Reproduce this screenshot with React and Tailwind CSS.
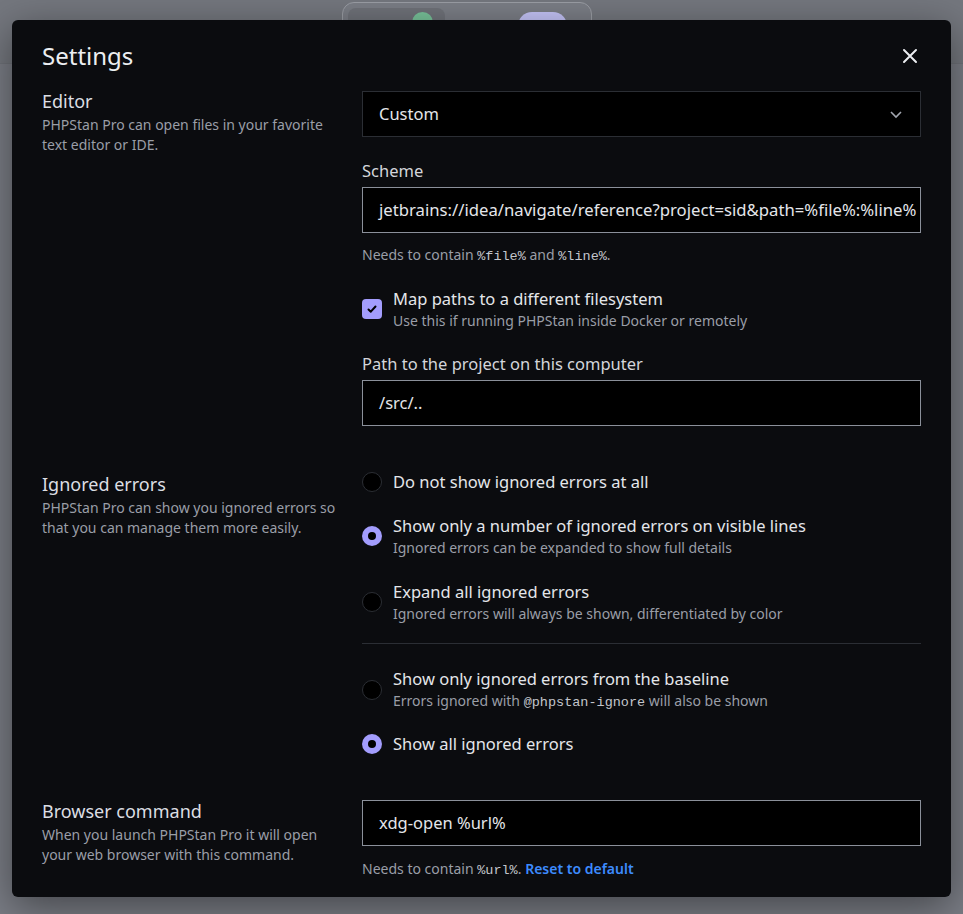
import { useState } from 'react'

function Radio({ checked }) {
  if (checked) {
    return (
      <span className="flex h-5 w-5 shrink-0 items-center justify-center rounded-full bg-[#a39dfd]">
        <span className="h-2 w-2 rounded-full bg-black" />
      </span>
    )
  }
  return <span className="h-5 w-5 shrink-0 rounded-full border border-[#2b2e34] bg-black" />
}

function Option({ title, sub, checked, onClick }) {
  return (
    <button className="flex w-full items-center gap-[11px] text-left" onClick={onClick}>
      <Radio checked={checked} />
      <div>
        <div className="text-[16.5px] leading-6 text-[#e4e6ea]">{title}</div>
        {sub ? <div className="text-sm leading-5 text-[#9a9ea7]">{sub}</div> : null}
      </div>
    </button>
  )
}

function SectionHead({ title, children }) {
  return (
    <div className="w-[300px] shrink-0">
      <div className="text-lg leading-7 text-[#dcdee3]">{title}</div>
      <div className="text-sm leading-5 text-[#9a9ea7]">{children}</div>
    </div>
  )
}

export default function App() {
  const [shown, setShown] = useState('count')
  const [scope, setScope] = useState('all')
  const [mapPaths, setMapPaths] = useState(true)

  var mono = { fontFamily: '"Liberation Mono", "DejaVu Sans Mono", monospace' }

  return (
    <div className="relative h-[914px] overflow-hidden bg-[#7a7d85]" style={{ fontFamily: '"Noto Sans", "Open Sans", sans-serif' }}>
      {/* page behind the dialog */}
      <div className="h-16 border-b border-[#6f7279] bg-[#74777e] pl-[342px] pt-[2px]">
        <div className="flex h-12 w-[250px] items-start gap-3 rounded-xl border border-[#9b9ea5] bg-[#7b7e86] p-[5px]">
          <div className="flex h-9 w-[97px] items-center gap-3 rounded-lg bg-[#6f7279] px-3">
            <span className="text-sm text-[#c9cbd0]">Errors</span>
            <span className="h-7 w-[26px] rounded-full bg-[#78c39a]" />
          </div>
          <div className="flex h-9 items-center gap-2 px-2">
            <span className="text-sm text-[#c9cbd0]">Wizard</span>
            <span className="h-7 w-[49px] rounded-full bg-[#c5c4f8]" />
          </div>
        </div>
      </div>

      <div className="absolute left-3 right-3 top-5 h-[877px] rounded-md bg-[#0b0c0f] px-[30px] pt-5 shadow-[0_10px_40px_rgba(0,0,0,0.45)]">
        <div className="flex h-8 items-center justify-between">
          <h2 className="text-2xl leading-8 text-[#eceef1]">Settings</h2>
          <button className="mr-[3px] text-[#eceef1]">
            <svg width="16" height="16" viewBox="0 0 16 16" fill="none" stroke="currentColor" strokeWidth="2" strokeLinecap="round">
              <path d="M2 2L14 14M14 2L2 14" />
            </svg>
          </button>
        </div>

        {/* Editor */}
        <div className="mt-[15px] flex gap-5">
          <SectionHead title="Editor">
            PHPStan Pro can open files in your favorite text editor or IDE.
          </SectionHead>
          <div className="min-w-0 flex-1 pt-1">
            <div className="flex h-[46px] items-center justify-between border border-[#2b2e34] bg-black pl-4 pr-[17px]">
              <span className="text-[16.5px] text-[#e4e6ea]">Custom</span>
              <svg width="14" height="14" viewBox="0 0 14 14" fill="none" stroke="#a3a7b0" strokeWidth="1.6">
                <path d="M2 5l5 5 5-5" />
              </svg>
            </div>

            <div className="mt-[22px] text-[16.5px] leading-6 text-[#d4d6db]">Scheme</div>
            <div className="mt-1 flex h-[46px] items-center overflow-hidden border border-[#8b909a] bg-black pl-4">
              <span className="whitespace-nowrap text-[16.7px] text-[#e4e6ea]">
                jetbrains://idea/navigate/reference?project=sid&amp;path=%file%:%line%
              </span>
            </div>
            <div className="mt-3 text-sm leading-5 text-[#9a9ea7]">
              Needs to contain <span style={mono} className="text-[13.5px] text-[#c3c6cc]">%file%</span> and{' '}
              <span style={mono} className="text-[13.5px] text-[#c3c6cc]">%line%</span>.
            </div>

            <button className="mt-5 flex items-center gap-[11px] text-left" onClick={function () { setMapPaths(!mapPaths) }}>
              {mapPaths ? (
                <span className="flex h-5 w-5 items-center justify-center rounded-[4px] bg-[#a39dfd]">
                  <svg width="12" height="12" viewBox="0 0 12 12" fill="none" stroke="#000" strokeWidth="2" strokeLinecap="round" strokeLinejoin="round">
                    <path d="M2.5 6.5l2.3 2.2L9.5 3.5" />
                  </svg>
                </span>
              ) : (
                <span className="h-5 w-5 rounded-[4px] border border-[#2b2e34] bg-black" />
              )}
              <div>
                <div className="text-[16.5px] leading-6 text-[#e4e6ea]">Map paths to a different filesystem</div>
                <div className="text-sm leading-5 text-[#9a9ea7]">Use this if running PHPStan inside Docker or remotely</div>
              </div>
            </button>

            <div className="mt-[21px] text-[16.5px] leading-6 text-[#d4d6db]">Path to the project on this computer</div>
            <div className="mt-1 flex h-[46px] items-center border border-[#8b909a] bg-black px-4">
              <span className="text-[16.5px] text-[#e4e6ea]">/src/..</span>
            </div>
          </div>
        </div>

        {/* Ignored errors */}
        <div className="mt-[44px] flex gap-5">
          <SectionHead title="Ignored errors">
            PHPStan Pro can show you ignored errors so that you can manage them more easily.
          </SectionHead>
          <div className="flex-1">
            <Option title="Do not show ignored errors at all" checked={shown === 'none'} onClick={function () { setShown('none') }} />
            <div className="mt-5">
              <Option
                title="Show only a number of ignored errors on visible lines"
                sub="Ignored errors can be expanded to show full details"
                checked={shown === 'count'}
                onClick={function () { setShown('count') }}
              />
            </div>
            <div className="mt-[22px]">
              <Option
                title="Expand all ignored errors"
                sub="Ignored errors will always be shown, differentiated by color"
                checked={shown === 'all'}
                onClick={function () { setShown('all') }}
              />
            </div>
            <div className="mt-[19px] h-px bg-[#2b2e34]" />
            <div className="mt-[23px]">
              <Option
                title="Show only ignored errors from the baseline"
                sub={
                  <span>
                    Errors ignored with <span style={mono} className="text-[13.5px] text-[#c3c6cc]">@phpstan-ignore</span> will also be shown
                  </span>
                }
                checked={scope === 'baseline'}
                onClick={function () { setScope('baseline') }}
              />
            </div>
            <div className="mt-[19px]">
              <Option title="Show all ignored errors" checked={scope === 'all'} onClick={function () { setScope('all') }} />
            </div>
          </div>
        </div>

        {/* Browser command */}
        <div className="mt-[41px] flex gap-5">
          <SectionHead title="Browser command">
            When you launch PHPStan Pro it will open your web browser with this command.
          </SectionHead>
          <div className="flex-1 pt-[3px]">
            <div className="flex h-[46px] items-center border border-[#8b909a] bg-black px-4">
              <span className="text-[16.5px] text-[#e4e6ea]">xdg-open %url%</span>
            </div>
            <div className="mt-[13px] text-sm leading-5 text-[#9a9ea7]">
              Needs to contain <span style={mono} className="text-[13.5px] text-[#c3c6cc]">%url%</span>.{' '}
              <a className="font-semibold text-[#3d8bfd]" href="#">Reset to default</a>
            </div>
          </div>
        </div>
      </div>
    </div>
  )
}
